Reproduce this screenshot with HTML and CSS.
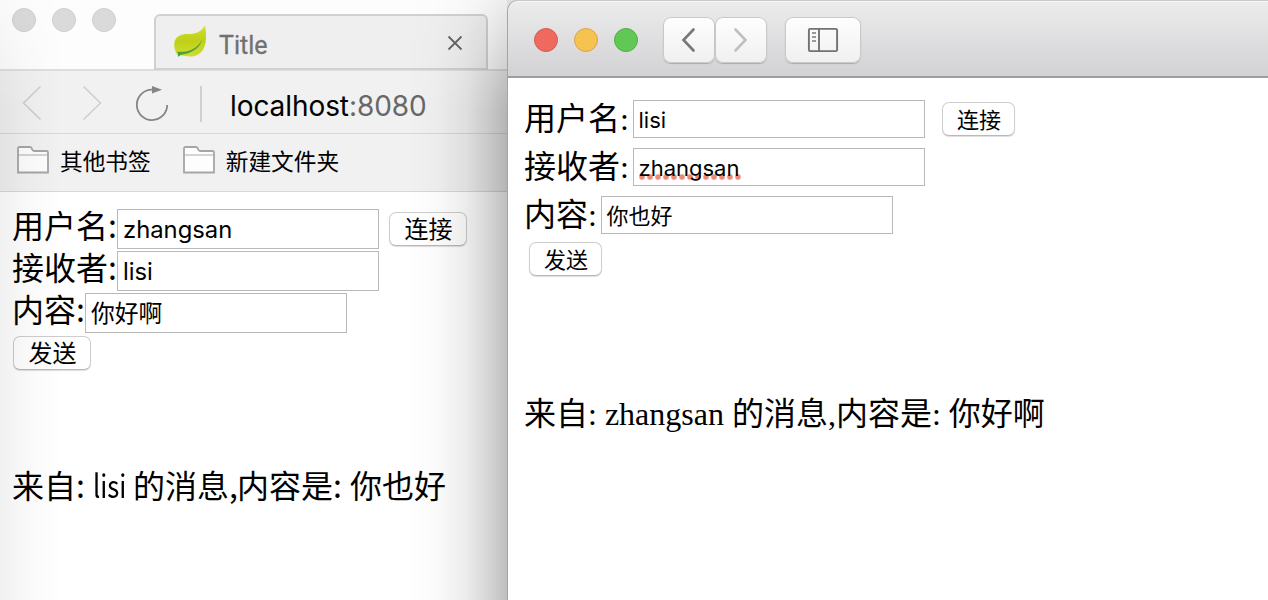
FILE: index.html
```
<!DOCTYPE html>
<html lang="zh-CN">
<head>
<meta charset="utf-8">
<title>Title</title>
<link rel="stylesheet" href="styles.css">
</head>
<body>
<div class="desktop">
  <section class="back-window">
    <header class="tab-strip">
      <div class="lights muted"><i></i><i></i><i></i></div>
      <div class="tab">
        <svg class="leaf" width="34" height="34" viewBox="0 0 34 34">
          <defs><linearGradient id="lf" x1="0" y1="0" x2="0" y2="1"><stop offset="0" stop-color="#d2df2f"/><stop offset=".5" stop-color="#bfd018"/><stop offset="1" stop-color="#d3db35"/></linearGradient></defs>
          <path d="M32 .5C33 5 33.500 11 32.500 18C31 26 26 31 19 31.500C13 32 9 29.500 5 30.500C2 27 .8 22 1.300 18C2.500 11 8 9 15 9C23 9 28 7 32 .5Z" fill="url(#lf)"/>
          <path d="M29 14C27 20 21 24.500 14 26.200C10 27 7 26.500 4.500 26.800L5.200 32C7 29.200 11 29.500 15 28.200C22 26 28 21 29 14Z" fill="#4da334"/>
        </svg>
        <span class="tab-title">Title</span>
        <svg class="close" width="16" height="16" viewBox="0 0 16 16"><path d="M1.500 1.500L14.500 14.500M14.500 1.500L1.500 14.500" stroke="#666" stroke-width="1.800" fill="none"/></svg>
      </div>
    </header>
    <div class="address-bar">
      <svg width="204" height="62" viewBox="0 0 204 62" fill="none">
        <path d="M40.500 15.500L23.500 32L40.500 48.500M83.500 15.500L100.500 32L83.500 48.500" stroke="#cfcfcf" stroke-width="1.600"/>
        <path d="M156 18.700H152A15.200 15.200 0 1 0 167.200 34" stroke="#858585" stroke-width="1.800"/>
        <path d="M152 15L162 18.700L152 22.500Z" fill="#858585"/>
        <path d="M201 15V51" stroke="#d0d0d0" stroke-width="2"/>
      </svg>
      <span class="url"><b>localhost</b>:8080</span>
    </div>
    <div class="bookmarks">
      <span class="bookmark">
        <svg width="32" height="28" viewBox="0 0 32 28"><path d="M1 26.500V2.500Q1 1 2.500 1H13Q14.500 1 15 3Q15.500 5 17 5H29.500Q31 5 31 6.500V26.500Z" fill="#fdfdfd" stroke="#a6a6a6" stroke-width="1.800"/><path d="M2 9H30" stroke="#d0d0d0" stroke-width="1.800"/></svg>
        <span>其他书签</span>
      </span>
      <span class="bookmark">
        <svg width="32" height="28" viewBox="0 0 32 28"><path d="M1 26.500V2.500Q1 1 2.500 1H13Q14.500 1 15 3Q15.500 5 17 5H29.500Q31 5 31 6.500V26.500Z" fill="#fdfdfd" stroke="#a6a6a6" stroke-width="1.800"/><path d="M2 9H30" stroke="#d0d0d0" stroke-width="1.800"/></svg>
        <span>新建文件夹</span>
      </span>
    </div>
    <main class="page page-back">
      <div class="row"><label class="label">用户名<span class="colon">:</span></label><div class="field">zhangsan</div><button class="btn connect">连接</button></div>
      <div class="row"><label class="label">接收者<span class="colon">:</span></label><div class="field">lisi</div></div>
      <div class="row"><label class="label">内容<span class="colon">:</span></label><div class="field">你好啊</div></div>
      <button class="btn send">发送</button>
      <p class="message">来自<span class="gap-colon">:</span><span class="name">lisi</span>的消息<span class="comma">,</span>内容是<span class="gap-colon">:</span>你也好</p>
    </main>
  </section>
  <section class="front-window">
    <header class="toolbar">
      <div class="lights"><i class="red"></i><i class="yellow"></i><i class="green"></i></div>
      <div class="nav">
        <span class="tool"><svg width="52" height="46" viewBox="0 0 52 46"><path d="M30.500 12.500L20.500 23L30.500 33.500" fill="none" stroke="#777" stroke-width="2.600" stroke-linecap="round"/></svg></span>
        <span class="tool"><svg width="52" height="46" viewBox="0 0 52 46"><path d="M20.500 12.500L30.500 23L20.500 33.500" fill="none" stroke="#c0c0c0" stroke-width="2.600" stroke-linecap="round"/></svg></span>
      </div>
      <span class="tool wide"><svg width="76" height="46" viewBox="0 0 76 46" fill="none"><rect x="23.900" y="11.900" width="28.200" height="22.200" rx="1.200" stroke="#727272" stroke-width="1.900"/><path d="M34 12V34" stroke="#727272" stroke-width="1.900"/><path d="M27 16H31M27 20H31M27 24H31" stroke="#999" stroke-width="1.800"/></svg></span>
    </header>
    <main class="page page-front">
      <div class="row"><label class="label">用户名:</label><div class="field">lisi</div><button class="btn connect">连接</button></div>
      <div class="row"><label class="label">接收者:</label><div class="field"><span class="misspelled">zhangsan</span></div></div>
      <div class="row"><label class="label">内容:</label><div class="field">你也好</div></div>
      <button class="btn send">发送</button>
      <p class="message">来自: zhangsan 的消息,内容是: 你好啊</p>
    </main>
  </section>
</div>
</body>
</html>
```
FILE: styles.css
```
* { box-sizing: border-box; }
body { margin: 0; overflow: hidden; background: #fff; color: #000; }
svg { display: block; flex: none; }
.desktop { display: flex; width: 1268px; height: 600px; overflow: hidden; background: #dedede; }
.back-window { position: relative; flex: none; width: 507px; height: 600px; background: #fff; font-family: "Noto Sans CJK SC", sans-serif; }
/* Shading cast by the neighbouring windows */
.back-window::after { content: ""; position: absolute; inset: 0; pointer-events: none; background: linear-gradient(90deg, rgba(0,0,0,.055), rgba(0,0,0,.025) 28px, transparent 62px, transparent 407px, rgba(0,0,0,.02) 437px, rgba(0,0,0,.07) 464px, rgba(0,0,0,.15) 485px, rgba(0,0,0,.25) 507px); -webkit-mask-image: linear-gradient(rgba(0,0,0,.25), #000 110px); mask-image: linear-gradient(rgba(0,0,0,.25), #000 110px); }
.tab-strip { display: flex; height: 71px; padding-left: 12px; background: #fdfdfd; border-bottom: 2px solid #dedede; }
.lights { display: flex; gap: 16px; }
.lights i { width: 24px; height: 24px; border-radius: 50%; border: 1px solid #cecece; background: #dadada; }
.muted { width: 142px; padding-top: 8px; flex: none; }
.tab { display: flex; align-items: center; width: 334px; height: 56px; margin-top: 14px; padding: 0 23px 0 17px; border: 2px solid #d1d1d1; border-radius: 6px 6px 0 0; background: #efefef; }
.tab-title { margin: 7px auto 0 12px; font: 25px/30px Roboto, sans-serif; color: #717171; -webkit-text-stroke: .3px #717171; }
.close { margin-top: 2px; }
.address-bar { display: flex; align-items: center; height: 63px; background: #f1f1f1; border-bottom: 1px solid #d8d8d8; }
.url { margin: 8px 0 0 26px; font: 28px/34px Inter, sans-serif; color: #686868; letter-spacing: -.08px; white-space: nowrap; }
.url b { font-weight: 400; color: #000; }
.bookmarks { display: flex; gap: 32px; height: 58px; padding: 12px 0 0 17px; background: #f1f1f1; border-bottom: 1px solid #d8d8d8; font-size: 22.700px; line-height: 30px; }
.bookmark { display: flex; gap: 11px; white-space: nowrap; }
.page { white-space: nowrap; }
.row { display: flex; }
.label { flex: none; font-size: 32px; }
.field { flex: none; border: 1px solid #b9b9b9; background: #fff; padding-left: 5px; font-family: Inter, "Noto Sans CJK SC", sans-serif; }
.btn { display: block; padding: 0 0 0 1px; border: 1px solid #cecece; border-bottom-color: #b9b9b9; border-radius: 7px; background: #fff; box-shadow: 0 1px 1px #ddd; color: #000; font-family: "Noto Sans CJK SC", sans-serif; }
.message { margin: 0; font-size: 32px; line-height: 40px; }
.page-back { padding: 17px 0 0 12px; }
.page-back .row { height: 42px; }
.page-back .label { line-height: 30px; }
.colon { display: inline-block; width: 9px; }
.page-back .field { width: 262px; height: 40px; font-size: 23.800px; line-height: 40px; }
.page-back .btn { width: 78px; height: 34px; padding-bottom: 2px; font-size: 24px; line-height: 30px; }
.page-back .connect { margin: 3px 0 0 10px; }
.page-back .send { margin: 1px 0 0 1px; }
.page-back .message { margin-top: 94px; }
.gap-colon { display: inline-block; width: 17px; }
.name { display: inline-block; width: 40px; transform: scaleX(.8); transform-origin: 0 0; }
.comma { display: inline-block; width: 8px; }
.front-window { position: relative; flex: none; width: 761px; height: 600px; padding-top: 1px; border-left: 1px solid #a4a4a4; border-radius: 11px 0 0 0; background: #c8c8c8; overflow: hidden; }
.toolbar { display: flex; height: 77px; padding: 15px 0 0 26px; background: linear-gradient(#ececed, #d2d2d4); border-top: 1px solid #f8f8f8; border-bottom: 2px solid #9e9e9e; border-radius: 10px 0 0 0; }
.toolbar .lights { padding-top: 11px; }
.toolbar .red { background: #ee6a5f; border-color: #d65b52; }
.toolbar .yellow { background: #f6c351; border-color: #d8a54a; }
.toolbar .green { background: #61c755; border-color: #51ae45; }
.nav { display: flex; margin: 0 18px 0 25px; }
.tool { width: 52px; height: 46px; border-radius: 8px; background: linear-gradient(#fefefe, #f0f0f1); box-shadow: inset 0 0 0 1px #c9c9cb, 0 1px 1px #aaa; }
.wide { width: 76px; }
.page-front { height: 522px; padding: 21px 0 0 16px; background: #fff; font-family: "Liberation Serif", "Noto Sans CJK SC", serif; }
.page-front .row { height: 48px; }
.page-front .label { width: 109px; line-height: 40px; }
.page-front .row:nth-child(3) .label { width: 77px; }
.page-front .field { width: 292px; height: 38px; margin-top: 1px; padding-left: 4.500px; font-size: 22px; line-height: 38px; }
.page-front .btn { width: 73px; height: 34px; padding-bottom: 2px; font-size: 22px; line-height: 30px; }
.page-front .connect { margin: 3px 0 0 17px; }
.page-front .send { margin: -1px 0 0 5px; }
.page-front .message { margin-top: 118px; }
/* Spell-check dots sit underneath the letters */
.misspelled { position: relative; z-index: 0; }
.misspelled::after { content: ""; position: absolute; z-index: -1; left: -1px; bottom: 1px; width: 103px; height: 6px; background: radial-gradient(circle, #ee715f 2px, rgba(238,113,95,.4) 3px, transparent 3.500px) 0 0 / 8px 6px; opacity: .85; }
```
